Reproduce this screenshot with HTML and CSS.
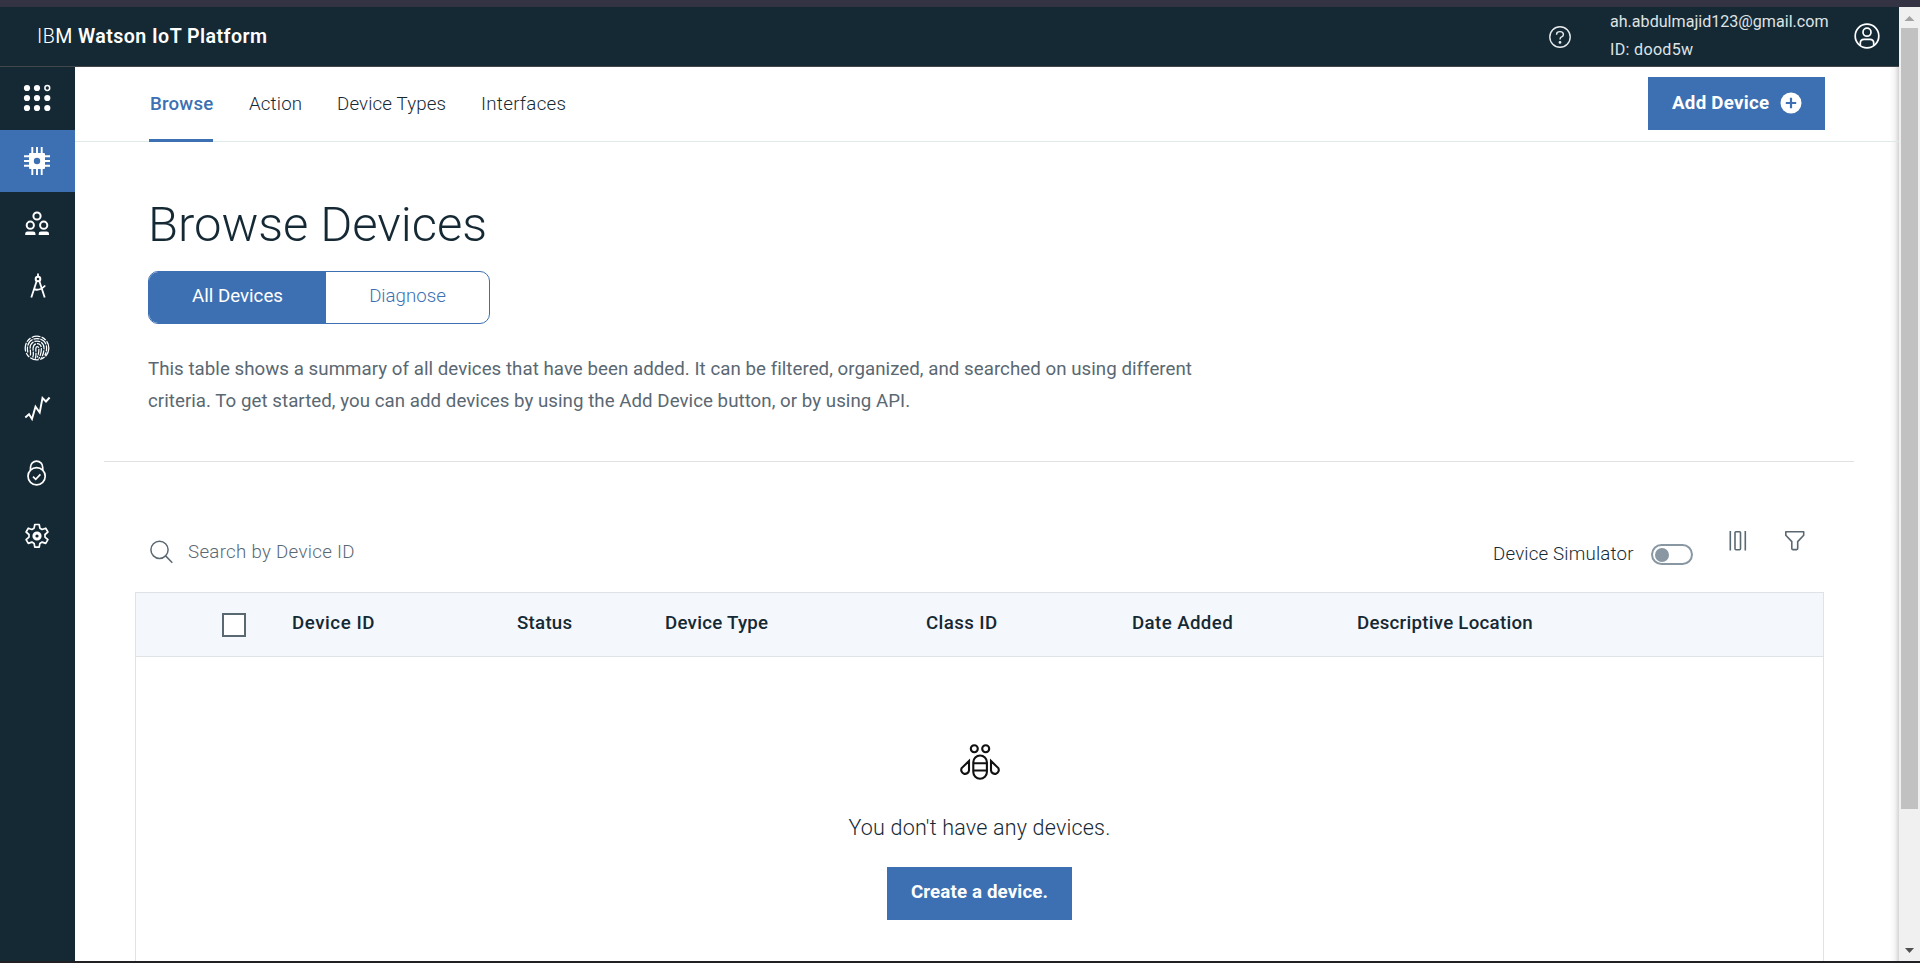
FILE: index.html
```html
<!DOCTYPE html>
<html lang="en">
<head>
<meta charset="utf-8">
<title>IBM Watson IoT Platform</title>
<link rel="stylesheet" href="styles.css">
</head>
<body>
<div class="strip"></div>
<div class="window">
  <div class="app">
    <header class="header">
      <div class="brand"><span class="brand-thin">IB</span><span class="brand-mid">M</span> Watson IoT Platform</div>
      <svg class="help" width="22" height="22" viewBox="0 0 22 22" fill="none" stroke="#e8ebed" stroke-width="1.4"><circle cx="11" cy="11" r="10.2"/><path d="M7.6 8.8V8.2Q7.6 5.6 11 5.6T14.4 8.4Q14.4 10.2 12.6 10.9Q11 11.4 11 13.4"/><circle cx="11" cy="16.4" r=".7" fill="#e8ebed"/></svg>
      <div class="account"><div class="mail">ah.abdulmajid123@gmail.com</div><div class="org">ID: dood5w</div></div>
      <svg class="avatar" width="26" height="26" viewBox="0 0 26 26" fill="none" stroke="#fff" stroke-width="1.7"><circle cx="13" cy="13" r="11.8"/><circle cx="13" cy="9.2" r="4"/><path d="M6.3 22.2V20q0-3.7 3.8-3.7h5.8q3.8 0 3.8 3.7v2.2"/></svg>
    </header>
    <div class="body">
      <nav class="sidebar">
        <a class="side"><svg width="28" height="28" viewBox="0 0 28 28" fill="#fff"><circle cx="4" cy="4" r="3.1"/><circle cx="14" cy="4" r="3.1"/><circle cx="24.3" cy="4" r="2.4" fill="none" stroke="#fff" stroke-width="1.5"/><circle cx="4" cy="14" r="3.1"/><circle cx="14" cy="14" r="3.1"/><circle cx="24.3" cy="14" r="3.1"/><circle cx="4" cy="24" r="3.1"/><circle cx="14" cy="24" r="3.1"/><circle cx="24.3" cy="24" r="3.1"/></svg></a>
        <a class="side active"><svg width="28" height="28" viewBox="0 0 28 28"><path d="M9.3 0v28M14 0v28M18.7 0v28M1 9.3h26M1 14h26M1 18.7h26" stroke="#fff" stroke-width="1.9"/><rect x="6" y="6" width="16" height="16" rx="1" fill="#fff"/><circle cx="14" cy="14" r="3.2" fill="#3d70b2"/></svg></a>
        <a class="side side-low"><svg width="28" height="28" viewBox="0 0 28 28" fill="none" stroke="#fff" stroke-width="2"><circle cx="14" cy="6" r="3.6"/><circle cx="7.3" cy="15.2" r="3.6"/><circle cx="20.7" cy="15.2" r="3.6"/><path d="M2.2 25v-1.2q0-2.3 2.3-2.3h5.7q2.3 0 2.3 2.3V25zM15.7 25v-1.2q0-2.3 2.3-2.3h5.7q2.3 0 2.3 2.3V25z" fill="#fff" stroke="none"/></svg></a>
        <a class="side"><svg width="28" height="28" viewBox="0 0 28 28" fill="none" stroke="#fff" stroke-width="1.8"><path d="M15 1.5v3M13.7 9L8.3 25.5M16.3 9l5.4 16.5M10.5 17.2q6.5 2 11.7-3.7"/><circle cx="15" cy="7" r="2.3" stroke-width="2"/></svg></a>
        <a class="side"><svg width="28" height="28" viewBox="0 0 28 28" fill="none" stroke="#fff" stroke-width="1.25"><circle cx="14" cy="14" r="11.8" stroke-dasharray="9 1.2 5 1.4"/><path d="M4.8 18.5C2.8 9 8 4.8 13.7 4.6c5.8-.1 9.9 3.6 9.9 9.3 0 3.2-.5 5.3-1.8 7.5M7.2 21.5c1.3-3-1-7 .4-10.4C9 8 11.2 7.1 14.1 7.1c4.3 0 6.9 3 6.9 7 0 3.6-.9 6.8-2.6 9.7M9.7 23.6c1.5-3.6.1-7 .4-9.7.3-2.7 1.8-4.2 4-4.2 2.7 0 4.3 2 4.3 4.8 0 3.7-1 7.3-2.7 10.3M12.3 24.7c1.3-3.5.3-8 .6-10.6.5-2.5 3.1-1.8 3 .7 0 3.6-.6 6-1.8 8.8" stroke-dasharray="6 .9 8 1"/></svg></a>
        <a class="side side-trend"><svg width="28" height="28" viewBox="0 0 28 28" fill="none" stroke="#fff" stroke-width="1.9"><path d="M2.3 22.5L6 19.3l3 4.7 3.5-12.3 4.2 5.8L19.5 3l3.5 3.5 3.6-4"/></svg></a>
        <a class="side"><svg width="28" height="28" viewBox="0 0 28 28" fill="none" stroke="#fff" stroke-width="1.7"><circle cx="13.6" cy="17.3" r="8.6"/><path d="M7.5 11V8.2a6.1 6.1 0 0 1 12.2 0V11M10 17.7l2.7 2.7 4.7-5"/></svg></a>
        <a class="side"><svg width="28" height="28" viewBox="0 0 28 28" fill="none" stroke="#fff" stroke-width="1.7" stroke-linejoin="round"><path d="M11.8 2.5h4.4l.7 3.7 2.2 1.3 3.6-1.3 2.2 3.8-2.9 2.5v2.6l2.9 2.5-2.2 3.8-3.6-1.3-2.2 1.3-.7 3.7h-4.4l-.7-3.7-2.2-1.3-3.6 1.3-2.2-3.8L6 15.1v-2.6L3.1 10l2.2-3.8 3.6 1.3 2.2-1.3z"/><circle cx="14" cy="14" r="3.1" stroke-width="3"/></svg></a>
      </nav>
      <main class="main">
        <div class="tabs">
          <a class="tab tab-on t-browse">Browse</a>
          <a class="tab t-action">Action</a>
          <a class="tab t-types">Device Types</a>
          <a class="tab t-inter">Interfaces</a>
          <button class="btn add"><span>Add Device</span><svg width="22" height="22" viewBox="0 0 22 22"><circle cx="11" cy="11" r="10.5" fill="#fff"/><path d="M11 5.8v10.4M5.8 11h10.4" stroke="#3d70b2" stroke-width="2.2"/></svg></button>
        </div>
        <section class="intro">
          <h1>Browse Devices</h1>
          <div class="group"><span class="seg seg-on">All Devices</span><span class="seg">Diagnose</span></div>
          <p>This table shows a summary of all devices that have been added. It can be filtered, organized, and searched on using different<br>criteria. To get started, you can add devices by using the Add Device button, or by using API.</p>
        </section>
        <div class="toolbar">
          <svg class="mag" width="24" height="24" viewBox="0 0 24 24" fill="none" stroke="#5a6872" stroke-width="1.5"><circle cx="9.5" cy="9.8" r="8.6"/><path d="M15.6 15.9l6.7 6.8"/></svg>
          <span class="search">Search by Device ID</span>
          <span class="sim">Device Simulator</span>
          <span class="toggle"><i></i></span>
          <svg class="cols" width="18" height="20" viewBox="0 0 18 20" fill="none" stroke="#5a6872" stroke-width="1.6"><path d="M1.3 0v19.5M16.3 0v19.5"/><rect x="6" y=".8" width="5.5" height="18" rx="1"/></svg>
          <svg class="filter" width="20" height="20" viewBox="0 0 20 20" fill="none" stroke="#5a6872" stroke-width="1.6"><path d="M.8.8h17.9v3.4l-6 6.400v7q0 1-1 1H7.800q-1 0-1-1v-7l-6-6.400z" stroke-linejoin="round"/></svg>
        </div>
        <div class="table">
          <div class="thead">
            <span class="check"></span>
            <span class="c1">Device ID</span><span class="c2">Status</span><span class="c3">Device Type</span><span class="c4">Class ID</span><span class="c5">Date Added</span><span class="c6">Descriptive Location</span>
          </div>
          <div class="empty">
            <svg width="40" height="36" viewBox="0 0 40 36" fill="none" stroke="#111" stroke-width="2.1"><circle cx="14.3" cy="4.7" r="3.5"/><circle cx="25.7" cy="4.7" r="3.5"/><rect x="13.3" y="11.5" width="13.6" height="23.3" rx="6.8"/><path d="M13.3 19.2h13.6M13.3 26.5h13.6"/><path d="M9 17v9.5a3.9 3.9 0 1 1-7.3-2.4zM31 17v9.5a3.9 3.9 0 1 0 7.3-2.4z" stroke-linejoin="miter"/></svg>
            <div class="none">You don't have any devices.</div>
            <button class="btn create"><span>Create a device.</span></button>
          </div>
        </div>
      </main>
    </div>
  </div>
  <div class="scroll">
    <svg width="17" height="21" viewBox="0 0 17 21"><path d="M3.5 14h10L8.5 9z" fill="#a3a3a3"/></svg>
    <div class="thumb"></div>
    <svg class="down" width="17" height="21" viewBox="0 0 17 21"><path d="M4 8h9l-4.5 5z" fill="#505050"/></svg>
  </div>
</div>
<div class="foot"></div>
</body>
</html>
```
FILE: styles.css
```css
* { box-sizing: border-box; }
body { margin: 0; width: 1920px; height: 963px; overflow: hidden; background: #fff; color: #152935; font: 18.7px/24px Roboto, "Open Sans", sans-serif; }
svg { display: block; flex: none; }
.strip { height: 7px; background: #333344; }
.foot { height: 2px; background: #202023; }
.window { display: flex; height: 954px; }
.app { width: 1899px; display: flex; flex-direction: column; }
.header { height: 60px; background: #152935; border-bottom: 1px solid #41474a; display: flex; align-items: flex-start; color: #fff; white-space: nowrap; }
.brand { width: 1511px; padding: 18px 0 0 37px; font-size: 19.6px; font-weight: 600; letter-spacing: .44px; }
.brand-thin { font-weight: 300; }
.brand-mid { font-weight: 400; }
.help { margin: 19px 0 0 38px; }
.account { width: 218px; margin: 1px 26px 0 39px; font-size: 16.1px; line-height: 28px; color: #dfe3e5; }
.org { letter-spacing: .3px; }
.avatar { margin-top: 16px; }
.body { display: flex; flex: 1; min-height: 0; }
.sidebar { width: 75px; background: #152935; display: flex; flex-direction: column; }
.side { height: 62.5px; padding-right: 2px; display: flex; align-items: center; justify-content: center; }
.side-low { padding-top: 2px; }
.side-trend { padding-bottom: 3px; }
.active { background: #3d70b2; }
.main { flex: 1; min-width: 0; overflow: hidden; background: linear-gradient(to left, #d4d4d4, #f4f4f4 4px, #fff 9px); }
.tabs { height: 75px; border-bottom: 1px solid #dfeae8; display: flex; align-items: flex-start; padding-left: 74px; white-space: nowrap; }
.tab { height: 75px; padding-top: 25px; font-weight: 300; letter-spacing: .15px; }
.tab-on { color: #3d70b2; font-weight: 500; border-bottom: 3px solid #3d70b2; letter-spacing: .2px; }
.t-browse { width: 64px; margin-right: 36px; padding-left: 1px; }
.t-action { width: 88px; }
.t-types { width: 144px; }
.t-inter { width: 90px; letter-spacing: .3px; }
.btn { height: 53px; border: 0; padding: 0; background: #3d70b2; color: #fff; font: 700 18.7px/24px Roboto, sans-serif; display: flex; white-space: nowrap; }
.add { width: 177px; margin: 10px 74px 0 auto; padding: 14px 0 0 24px; letter-spacing: .28px; }
.add span { width: 108px; text-align: left; }
.add svg { margin-top: 1px; }
.intro { height: 320px; margin: 0 45px 0 29px; padding: 53px 0 0 44px; border-bottom: 1px solid #dfe1e3; }
h1 { margin: 0; font-size: 49px; line-height: 60px; font-weight: 300; letter-spacing: -.05px; }
.group { width: 342px; height: 53px; margin-top: 16px; display: flex; border: 1px solid #3d70b2; border-radius: 10px; overflow: hidden; color: #3d70b2; }
.seg { flex: 1; padding-top: 12px; text-align: center; font-weight: 300; }
.seg-on { flex: none; width: 177px; background: #3d70b2; color: #fff; font-weight: 400; }
p { margin: 29px 0 0; line-height: 32px; color: #5a6872; white-space: nowrap; letter-spacing: .04px; }
.toolbar { height: 130px; padding: 69px 94px 0 75px; display: flex; align-items: flex-start; white-space: nowrap; }
.mag { margin-top: 9px; }
.search { margin: 9px auto 0 14px; color: #5a6872; font-weight: 300; letter-spacing: .3px; }
.sim { width: 141px; margin: 11px 17px 0 0; font-weight: 300; letter-spacing: .18px; }
.toggle { width: 42px; height: 21px; margin: 13px 36px 0 0; border: 2px solid #8897a2; border-radius: 11px; padding: 1.5px; }
.toggle i { display: block; width: 14px; height: 14px; border-radius: 50%; background: #8897a2; }
.cols { margin-right: 38px; }
.table { width: 1689px; height: 500px; margin-left: 60px; border: 1px solid #dfe3e6; }
.thead { height: 64px; background: #f4f7fb; border-bottom: 1px solid #dfe3e6; display: flex; font-weight: 500; white-space: nowrap; padding: 18px 0 0 86px; letter-spacing: .26px; }
.check { width: 24px; height: 24px; margin: 2px 46px 0 0; border: 2px solid #5a6872; background: #fff; }
.c1 { width: 225px; letter-spacing: .55px; }
.c2 { width: 148px; }
.c3 { width: 261px; }
.c4 { width: 206px; letter-spacing: .4px; }
.c5 { width: 225px; letter-spacing: .4px; }
.empty { display: flex; flex-direction: column; align-items: center; padding-top: 87px; }
.none { margin: 34px 0 25px; font-size: 21.5px; line-height: 28px; font-weight: 300; letter-spacing: .2px; }
.create { width: 185px; padding-top: 13px; justify-content: center; letter-spacing: .15px; }
.scroll { width: 21px; background: #f0f0f0; padding: 0 2px; display: flex; flex-direction: column; }
.thumb { height: 781px; background: #c1c1c1; }
.down { margin-top: auto; }
```
